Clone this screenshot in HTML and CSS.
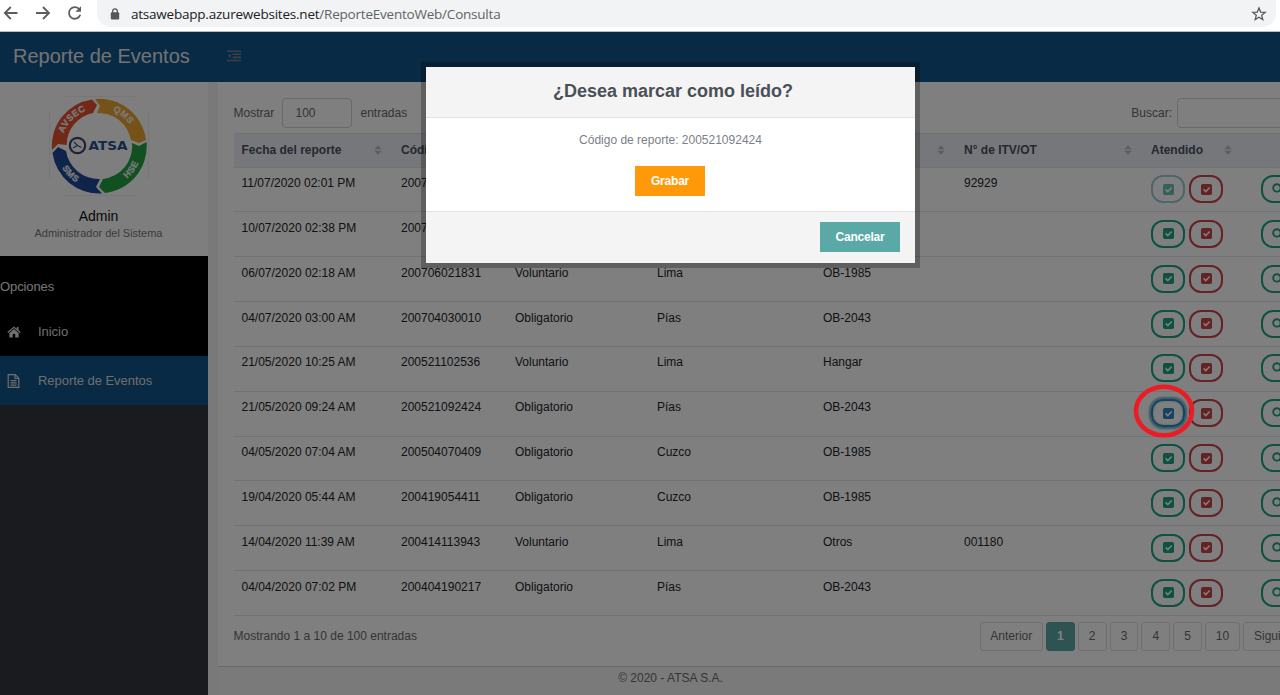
FILE: index.html
```html
<!DOCTYPE html>
<html lang="es">
<head>
<meta charset="utf-8">
<title>Reporte de Eventos</title>
<link rel="stylesheet" href="styles.css">
</head>
<body>
<svg class="defs" width="0" height="0" aria-hidden="true">
  <symbol id="check" viewBox="0 0 11 11"><rect width="11" height="11" rx="1.8" fill="currentColor"/><path d="M2.6 5.4l2.2 2.2 3.9-4" fill="none" stroke="#fff" stroke-width="1.5"/></symbol>
  <symbol id="search" viewBox="0 0 12 12"><circle cx="4.9" cy="4.9" r="3.7" fill="none" stroke="currentColor" stroke-width="1.9"/><path d="M7.6 7.6l3.5 3.5" stroke="currentColor" stroke-width="2"/></symbol>
  <symbol id="sort" viewBox="0 0 8 10"><path d="M4 0.3L7.7 4.3H.3zM4 9.7L.3 5.7h7.4z" fill="currentColor"/></symbol>
</svg>
<div class="browser">
  <svg class="nav" viewBox="0 0 90 26" fill="none" stroke="#5a5d61" stroke-width="1.8">
    <path d="M17.5 13H5M10.8 7L4.8 13l6 6M36 13h12.500M43 7l6 6-6 6"/>
    <path d="M79.500 9.500A5.800 5.800 0 1 0 80.300 14.800"/><path d="M81 6.200v5.600h-5.600z" fill="#5a5d61" stroke="none"/>
  </svg>
  <div class="omnibox">
    <svg class="lock" viewBox="0 0 10 12"><path d="M2.700 5V3.200a2.300 2.300 0 0 1 4.600 0V5" fill="none" stroke="#55585c" stroke-width="1.300"/><rect x=".8" y="4.300" width="8.400" height="7.300" rx="1" fill="#55585c"/></svg>
    <span class="url"><b>atsawebapp.azurewebsites.net</b>/ReporteEventoWeb/Consulta</span>
    <svg class="star" viewBox="0 0 16 16"><path d="M8 1.900l1.700 4.200 4.500.3-3.500 2.900 1.100 4.400L8 11.300l-3.800 2.400 1.100-4.400L1.800 6.400l4.500-.3z" fill="none" stroke="#55585c" stroke-width="1.300"/></svg>
  </div>
</div>
<div class="app">
  <header class="topbar">
    <h1 class="brand">Reporte de Eventos</h1>
    <svg class="toggle" viewBox="0 0 15 12" fill="#74808c"><path d="M0 0h15v1.700H0zM6 3.300h9V5H6zM6 6.600h9v1.700H6zM0 10h15v1.700H0zM4 3.300v5L.8 5.800z"/></svg>
  </header>
  <div class="columns">
    <aside class="sidebar">
      <div class="profile">
        <svg class="logo" viewBox="0 0 100 100">
          <path d="M16 .5h72M.5 16v68M99.500 16v68M16 99.500h72" stroke="#efefef"/>
          <g fill="none">
            <path d="M3 54A47 47 0 0 1 43 3.500L48 9 44 17A33 33 0 0 0 17.500 49L9 48z" fill="#e4502f"/>
            <path d="M46 3A47 47 0 0 1 97 44L90 47 82 44A33 33 0 0 0 48 17L51 10z" fill="#eba42e"/>
            <path d="M97.500 46A47 47 0 0 1 56 97L50 91 54 83A33 33 0 0 0 83 47L90 50z" fill="#22a040"/>
            <path d="M53 97.500A47 47 0 0 1 3.500 57L9 51 17 55A33 33 0 0 0 51 83L47 91z" fill="#1f4896"/>
            <path id="arc-top" d="M12.500 50A37.500 37.500 0 0 1 87.500 50"/>
            <path id="arc-left" d="M7 50A43 43 0 0 0 50 93"/>
            <path id="arc-right" d="M50 93A43 43 0 0 0 93 50"/>
          </g>
          <g class="ringtext">
            <text><textPath href="#arc-top" startOffset="11%">AVSEC</textPath></text>
            <text><textPath href="#arc-top" startOffset="62%">QMS</textPath></text>
            <text><textPath href="#arc-left" startOffset="34%">SMS</textPath></text>
            <text><textPath href="#arc-right" startOffset="45%">HSE</textPath></text>
          </g>
          <circle cx="28.500" cy="49.500" r="7.700" fill="none" stroke="#454067" stroke-width="2.200"/>
          <path d="M25 46l3.500 3.500 4 2M28.500 49.500L24 52" fill="none" stroke="#345487" stroke-width="1.200"/>
          <text class="logoname" x="39.500" y="54" textLength="39" lengthAdjust="spacingAndGlyphs">ATSA</text>
        </svg>
        <div class="user">Admin</div>
        <div class="role">Administrador del Sistema</div>
      </div>
      <nav class="menu">
        <div class="menu-title">Opciones</div>
        <a class="item"><svg viewBox="0 0 14 12"><path d="M7 .4L.3 6l.8.9L7 2l5.900 4.900.8-.9-2.200-1.900V1H9.800v1.700zM7 3L2.300 6.900V11.500H5.800V8h2.400v3.500h3.500V6.900z" fill="currentColor"/></svg>Inicio</a>
      </nav>
      <a class="item active"><svg class="doc" viewBox="0 0 12 14"><path d="M.7.7h7l3.600 3.600v9H.7zM7.500.7v3.800h3.800M3 6.700h6M3 8.900h6M3 11.100h6" fill="none" stroke="currentColor" stroke-width="1.200"/></svg>Reporte de Eventos</a>
    </aside>
    <main class="content">
      <section class="card">
        <div class="filters">
          <span class="show">Mostrar</span><span class="length">100</span><span class="entries">entradas</span>
          <span class="find">Buscar:</span><span class="search"></span>
        </div>
        <div class="table" id="table">
          <div class="row head">
            <span>Fecha del reporte<svg><use href="#sort"/></svg></span>
            <span>Códi</span>
            <span></span>
            <span></span>
            <span><svg><use href="#sort"/></svg></span>
            <span>N° de ITV/OT<svg><use href="#sort"/></svg></span>
            <span>Atendido<svg><use href="#sort"/></svg></span>
            <span></span>
          </div>
        </div>
        <div class="pager">
          <span class="info">Mostrando 1 a 10 de 100 entradas</span>
          <a class="prev">Anterior</a><a class="current">1</a><a>2</a><a>3</a><a>4</a><a>5</a><a class="ten">10</a><a class="next">Sigui</a>
        </div>
      </section>
      <footer class="footer">© 2020 - ATSA S.A.</footer>
    </main>
  </div>
  <div class="overlay">
    <div class="modal">
      <h2 class="modal-head">¿Desea marcar como leído?</h2>
      <div class="modal-body"><p>Código de reporte: 200521092424</p><button class="btn save">Grabar</button></div>
      <div class="modal-foot"><button class="btn cancel">Cancelar</button></div>
    </div>
  </div>
</div>
<svg class="marker" viewBox="0 0 62 54"><ellipse cx="31" cy="27" rx="28" ry="24.300" fill="none" stroke="#ed1c24" stroke-width="4.600"/></svg>
<script src="rows.js"></script>
</body>
</html>
```

FILE: styles.css
```css
* { box-sizing: border-box; }
body { margin: 0; width: 1280px; height: 695px; overflow: hidden; font: 12px/16px "Liberation Sans", Arial, sans-serif; color: #676a6c; position: relative; }
.defs { position: absolute; }
.browser { display: flex; height: 32px; background: #fff; border-bottom: 1px solid #b9bdc1; }
.nav { width: 90px; height: 26px; flex: none; }
.omnibox { flex: none; display: flex; align-items: center; width: 1179px; height: 27px; margin-left: 7px; padding: 0 9px 0 13px; background: #f1f3f4; border-radius: 0 0 14px 14px; }
.lock { width: 10px; height: 12px; }
.url { margin-left: 11px; font: 13.5px/20px "Open Sans", sans-serif; color: #606367; letter-spacing: -.22px; }
.url b { font-weight: 400; color: #202124; }
.star { width: 16px; height: 16px; margin-left: auto; }

.app { position: relative; height: 663px; overflow: hidden; background: #f3f3f4; }
.topbar { display: flex; align-items: center; height: 50px; background: #10548a; }
.brand { margin: 0; padding: 0 0 2px 13px; width: 227px; font-size: 20px; line-height: 24px; font-weight: 400; color: #e6e6e6; white-space: nowrap; }
.toggle { width: 14px; height: 12px; margin-bottom: 2px; }
.columns { display: flex; height: 613px; }
.sidebar { width: 208px; flex: none; background: #34363d; }
.profile { display: flex; flex-direction: column; align-items: center; height: 174px; padding: 14px 11px 0 0; background: #fdfdfd; }
.logo { width: 100px; height: 100px; }
.ringtext { font: bold 9px "Liberation Sans", sans-serif; fill: #f0f0f0; stroke: #f0f0f0; stroke-width: .3px; letter-spacing: .5px; }
.logoname { font: bold 12.5px "DejaVu Sans", sans-serif; fill: #24508f; }
.user { margin-top: 11px; font-size: 14px; line-height: 18px; color: #111; }
.role { font-size: 11px; color: #777; white-space: nowrap; letter-spacing: -.02px; }
.menu { height: 100px; background: #000; color: #e9e9e9; }
.menu-title { padding: 22px 0 0; height: 51px; font-size: 13px; line-height: 18px; letter-spacing: -.1px; }
.item { display: flex; align-items: center; height: 49px; padding-left: 7px; font-size: 13px; letter-spacing: -.04px; color: #dcdcdc; }
.item svg { width: 14px; height: 12px; margin-right: 17px; }
.item .doc { width: 13px; height: 14px; margin-right: 18px; }
.item.active { height: 49px; background: #10548a; }

.content { flex: 1; min-width: 0; display: flex; flex-direction: column; margin-left: 10px; }
.card { height: 585px; background: #fff; padding: 16px 0 0 15.500px; border-bottom: 1px solid #cfcfcf; overflow: hidden; }
.filters { display: flex; align-items: center; height: 30px; }
.show { width: 48.500px; }
.length { width: 70px; height: 30px; padding: 6px 12.500px; border: 1px solid #cfd3d6; border-radius: 4px; }
.entries { margin-left: 8.500px; }
.find { margin-left: auto; }
.search { width: 170px; height: 30px; margin: 0 -67px 0 5px; border: 1px solid #cfd3d6; border-radius: 4px; }
.table { margin-top: 5px; width: 1150px; }
.row { display: grid; grid-template-columns: 159.500px 114px 142px 166px 141px 187px 100px 140px; height: 44.850px; border-bottom: 1px solid #e2e5e8; color: #212529; padding-top: 7.500px; white-space: nowrap; }
.row > span { padding-left: 8px; }
.row.head { height: 34.500px; background: #eaeef5; border-top: 1px solid #dde1e6; color: #4a5063; font-weight: bold; }
.row.head > span { display: flex; }
.row.head svg { width: 8px; height: 10px; margin: 3px 11px 0 auto; color: #b9bdc8; }
.row .actions { display: flex; gap: 4px; }
.row .more { padding-left: 18px; }
.act { display: flex; align-items: center; justify-content: center; width: 34px; height: 28px; border: 2px solid; border-radius: 12px; }
.act svg { width: 11px; height: 11px; }
.green { color: #1ca284; }
.red { color: #c9444a; }
.faded { color: #6fc1b0; border-color: #9bcbd8; }
.focused { color: #2b88c0; box-shadow: 0 0 2px 2px #74b3cf, inset 0 0 2px 0 #74b3cf; }
.more .act svg { width: 12px; height: 12px; }
.pager { display: flex; align-items: center; height: 31px; margin-top: 5px; gap: 3px; }
.info { width: 743px; flex: none; }
.pager a { flex: none; width: 28.800px; height: 29px; line-height: 27px; border: 1px solid #ddd; border-radius: 3px; text-align: center; }
.pager .prev { width: 63.500px; }
.pager .current { background: #5aa9a6; border-color: #5aa9a6; color: #fff; font-weight: bold; }
.pager .ten { width: 35px; }
.pager .next { width: 76px; padding-left: 10px; text-align: left; }
.footer { flex: 1; background: #f5f5f5; text-align: center; padding: 3px 157px 0 0; }

.overlay { position: absolute; inset: 0; background: rgba(0,0,0,.5); }
.modal { width: 489px; margin: 35px 0 0 426px; background: #fff; box-shadow: 0 0 0 5px rgba(0,0,0,.25); }
.modal-head { margin: 0; height: 51px; padding: 12px 0 0 5px; background: #f4f4f4; border-bottom: 1px solid #e2e2e2; text-align: center; font-size: 18px; line-height: 24px; color: #4b4f57; }
.modal-body { height: 93px; padding-top: 14px; text-align: center; color: #7b7f87; }
.modal-body p { margin: 0 0 18px; }
.btn { display: block; height: 30px; border: 0; padding: 0; color: #fff; font: bold 12px/30px "Liberation Sans", sans-serif; letter-spacing: -.2px; }
.save { width: 70px; margin: 0 0 0 209px; background: #ff990a; }
.modal-foot { display: flex; justify-content: flex-end; height: 52px; padding: 10px 15px; background: #f4f4f4; border-top: 1px solid #e2e2e2; }
.cancel { width: 80px; background: #5aa9a6; }
.marker { position: absolute; left: 1133px; top: 384px; width: 62px; height: 54px; }
```

FILE: rows.js
```js
const rows = [
  ["11/07/2020 02:01 PM", "2007", "", "", "", "92929"],
  ["10/07/2020 02:38 PM", "2007", "", "", "", ""],
  ["06/07/2020 02:18 AM", "200706021831", "Voluntario", "Lima", "OB-1985", ""],
  ["04/07/2020 03:00 AM", "200704030010", "Obligatorio", "Pías", "OB-2043", ""],
  ["21/05/2020 10:25 AM", "200521102536", "Voluntario", "Lima", "Hangar", ""],
  ["21/05/2020 09:24 AM", "200521092424", "Obligatorio", "Pías", "OB-2043", ""],
  ["04/05/2020 07:04 AM", "200504070409", "Obligatorio", "Cuzco", "OB-1985", ""],
  ["19/04/2020 05:44 AM", "200419054411", "Obligatorio", "Cuzco", "OB-1985", ""],
  ["14/04/2020 11:39 AM", "200414113943", "Voluntario", "Lima", "Otros", "001180"],
  ["04/04/2020 07:02 PM", "200404190217", "Obligatorio", "Pías", "OB-2043", ""]
];
const states = { 0: "faded", 5: "focused" };
const action = (cls, icon) => `<i class="act ${cls}"><svg><use href="#${icon}"/></svg></i>`;
document.getElementById("table").insertAdjacentHTML("beforeend", rows.map((r, i) =>
  `<div class="row">${r.map(c => `<span>${c}</span>`).join("")}` +
  `<span class="actions">${action(states[i] || "green", "check")}${action("red", "check")}</span>` +
  `<span class="more">${action("green", "search")}</span></div>`).join(""));
```
